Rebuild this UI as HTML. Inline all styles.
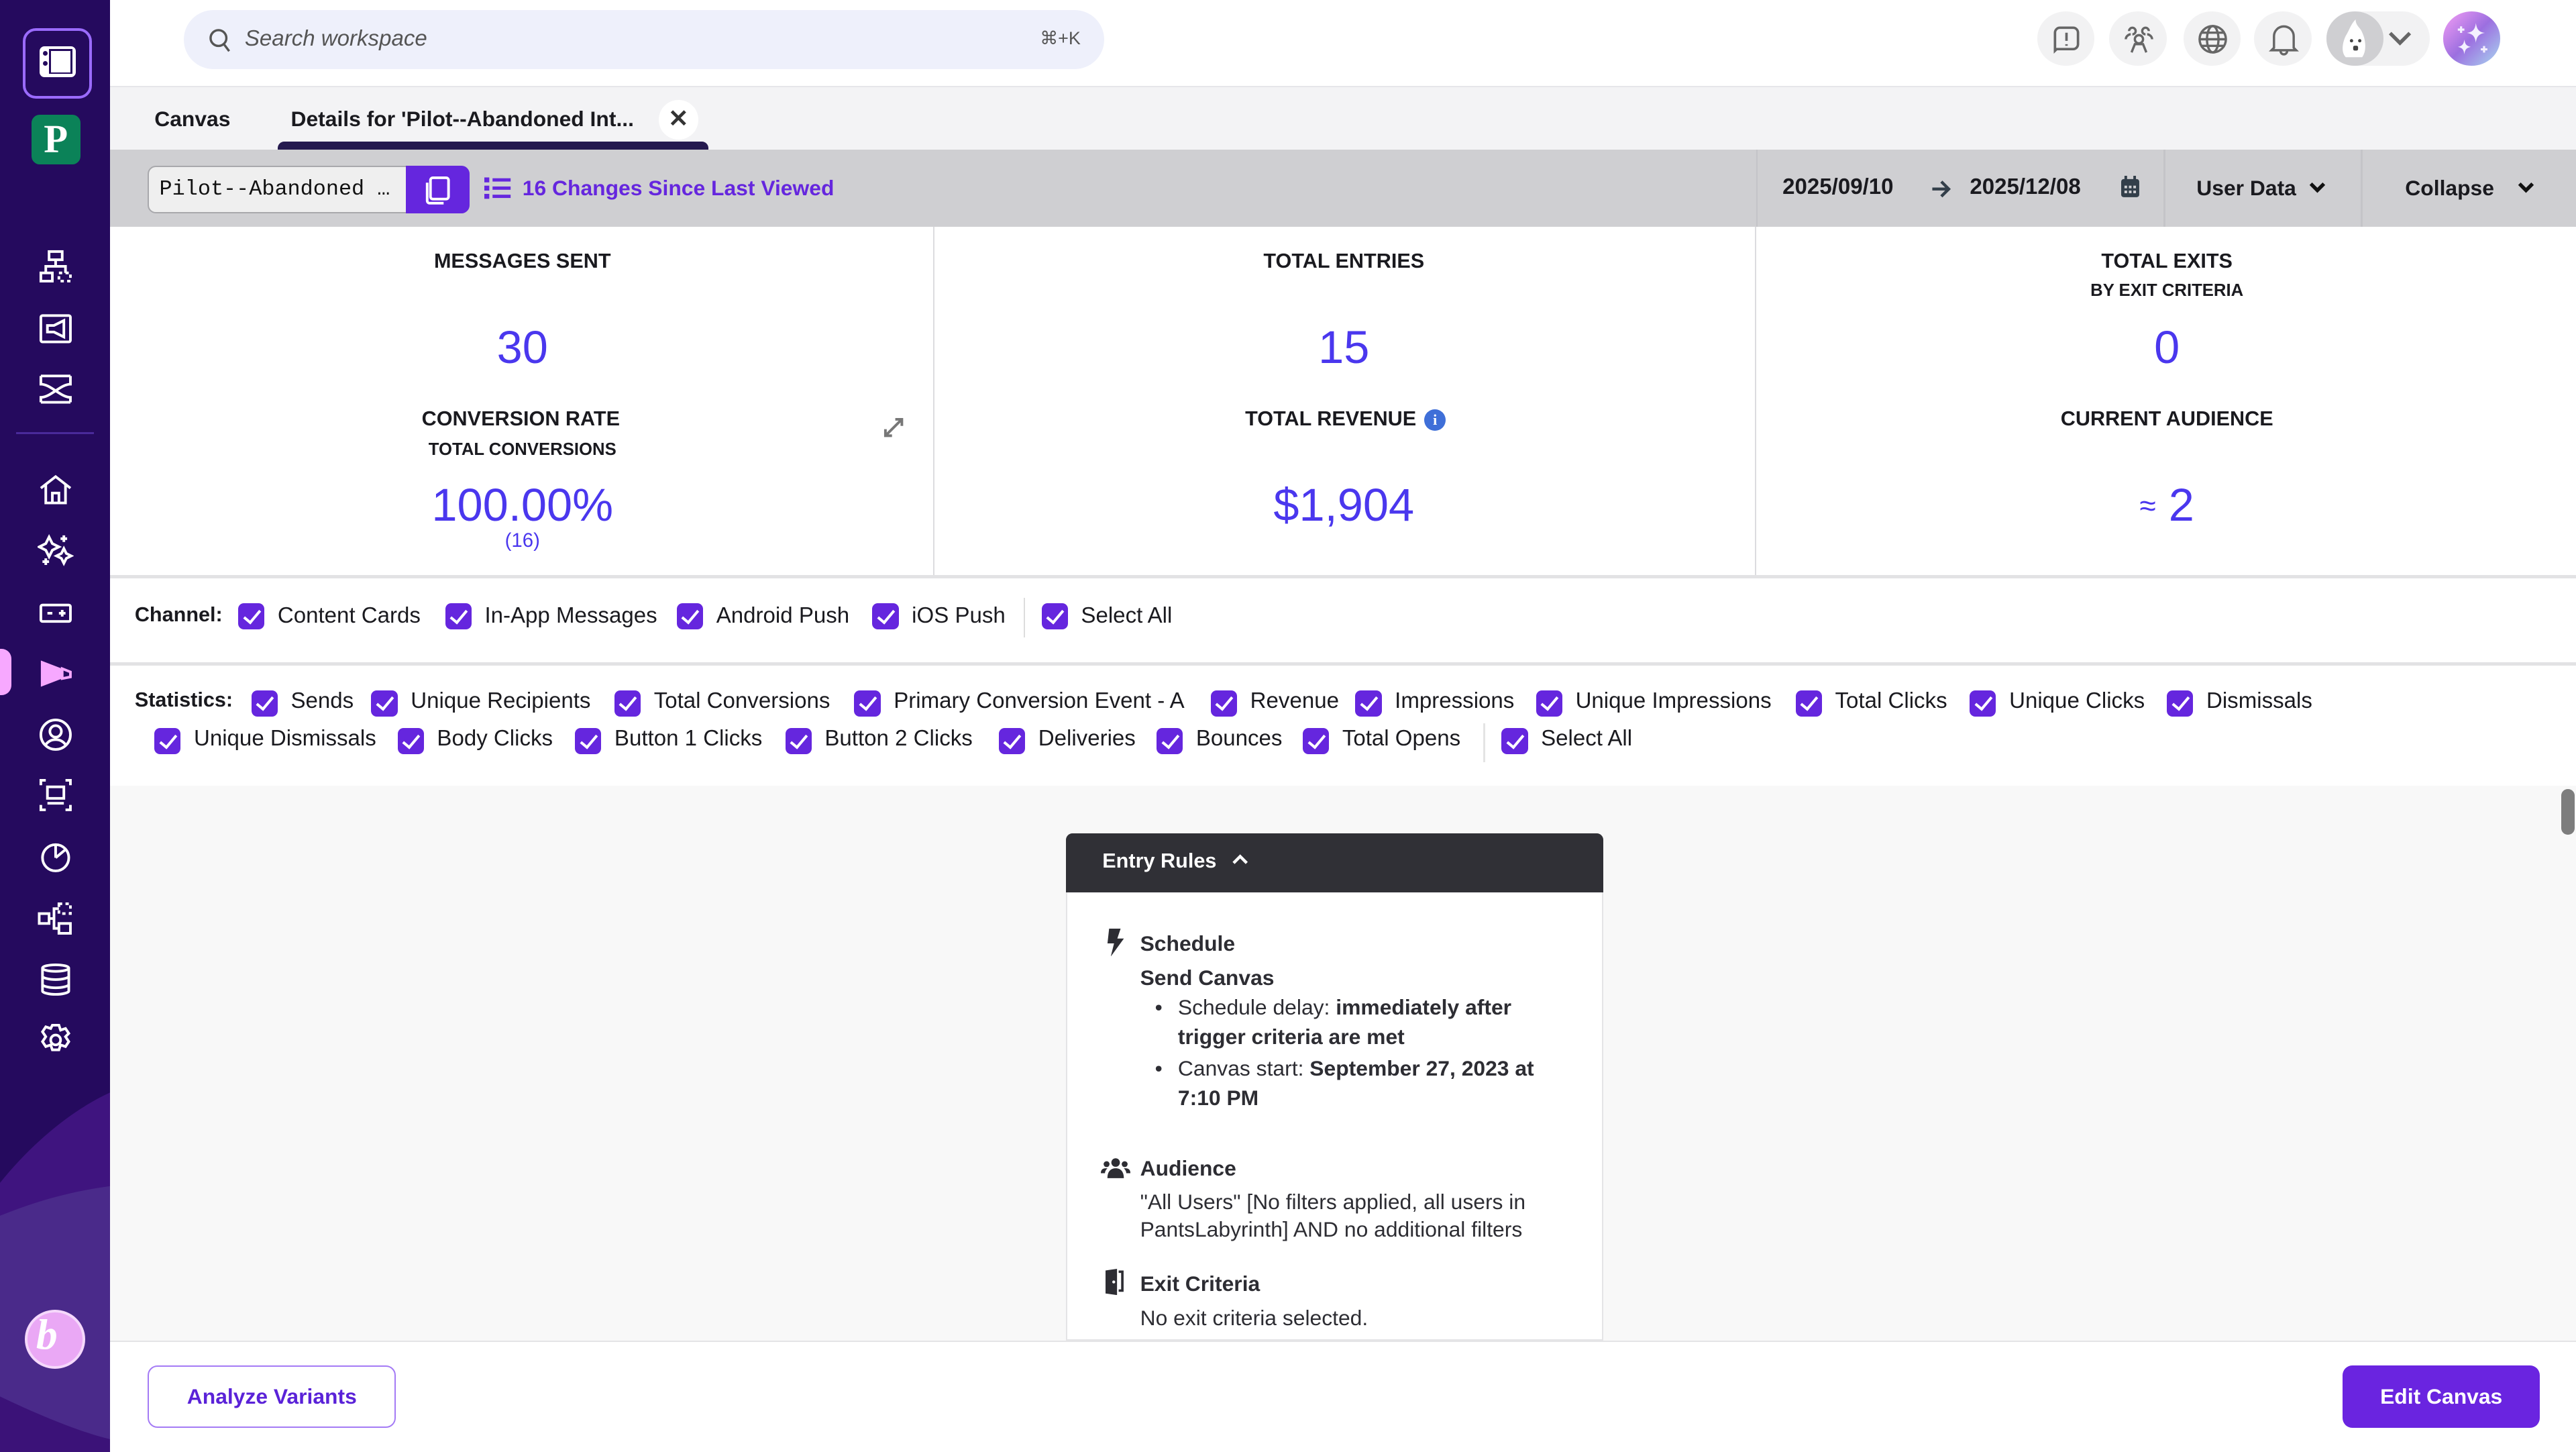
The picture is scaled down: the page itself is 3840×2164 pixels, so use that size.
<!DOCTYPE html>
<html><head><meta charset="utf-8">
<style>
*{box-sizing:border-box;margin:0;padding:0}
html,body{width:3840px;height:2164px;overflow:hidden;background:#fff}
#w{zoom:2.44898;width:1568px;height:884px;position:relative;font-family:"Liberation Sans",sans-serif;color:#1a1a1f;overflow:hidden}
.a{position:absolute}
.sb{left:0;top:0;width:67px;height:884px;background:#250a5e;overflow:hidden}
.ic{position:absolute;left:23px;width:22px;height:22px}
.cb{position:absolute;width:16px;height:16px;border-radius:3.5px;background:#6526de}
.cb:after{content:"";position:absolute;left:5.5px;top:2px;width:4px;height:8.5px;border:solid #fff;border-width:0 2px 2px 0;transform:rotate(40deg)}
.lb{position:absolute;font-size:13.5px;white-space:nowrap}
.hd{position:absolute;font-weight:bold;font-size:12.5px;text-align:center;width:500px}
.sub{position:absolute;font-weight:bold;font-size:10.5px;text-align:center;width:500px}
.num{position:absolute;color:#4a37ee;text-align:center;width:500px;font-size:28px}
.circ{position:absolute;top:7px;width:35px;height:33px;border-radius:50%;background:#f2f2f3}
.er{font-size:13px;color:#2d2d33;line-height:18px}
</style></head><body><div id="w">
<div class="a sb">
 <svg class="a" style="left:0;top:600px" width="67" height="284"><path d="M0 120 C20 95 45 75 67 65 L67 284 L0 284Z" fill="#3f147f"/><path d="M0 140 C25 130 45 125 67 122 L67 284 L0 284Z" fill="#4a2a8a"/><path d="M0 250 C25 262 50 272 67 276 L67 284 L0 284Z" fill="#3b1278"/></svg>
 <div class="a" style="left:14px;top:17px;width:42px;height:43px;border:2px solid #9b6bff;border-radius:8px"></div>
 <div class="a" style="left:24px;top:28px;width:22px;height:19px;background:#fff;border-radius:3px"></div>
 <div class="a" style="left:26px;top:31px;width:3px;height:3px;background:#250a5e;border-radius:50%"></div>
 <div class="a" style="left:26px;top:37px;width:3px;height:3px;background:#250a5e;border-radius:50%"></div>
 <div class="a" style="left:30px;top:30px;width:14px;height:15px;background:#250a5e"></div>
 <div class="a" style="left:31px;top:31px;width:12px;height:13px;background:#fff"></div>
 <div class="a" style="left:19px;top:70px;width:30px;height:30px;background:#0b8258;border-radius:5px;color:#fff;font:bold 24px 'Liberation Serif',serif;text-align:center;line-height:30px">P</div>
 <svg class="ic" style="top:151px" viewBox="0 0 22 22" fill="none" stroke="#fff" stroke-width="1.6"><rect x="7" y="2" width="8" height="5"/><rect x="2" y="15" width="7" height="5"/><rect x="13" y="15" width="7" height="5" stroke-dasharray="2 2"/><path d="M11 7v4M5 15v-4h12v4"/></svg>
 <svg class="ic" style="top:189px" viewBox="0 0 22 22" fill="none" stroke="#fff" stroke-width="1.6"><rect x="2" y="3" width="18" height="16" rx="1"/><path d="M6 9h4l6-3v10l-6-3H6z"/></svg>
 <svg class="ic" style="top:226px" viewBox="0 0 22 22" fill="none" stroke="#fff" stroke-width="1.6"><path d="M2 3h18M2 19h18M2 3v5c6 0 12 8 18 8v3M20 3v5C14 8 8 16 2 16v3"/></svg>
 <div class="a" style="left:10px;top:263px;width:47px;height:1px;background:#4a2a9a"></div>
 <svg class="ic" style="top:287px" viewBox="0 0 22 22" fill="none" stroke="#fff" stroke-width="1.6"><path d="M2 10L11 3l9 7M5 8v11h12V8M9 19v-6h4v6"/></svg>
 <svg class="ic" style="top:324px" viewBox="0 0 22 22" fill="none" stroke="#fff" stroke-width="1.6"><path d="M7 3l2 4 4 2-4 2-2 4-2-4-4-2 4-2zM16 10l1.5 3 3 1.5-3 1.5-1.5 3-1.5-3-3-1.5 3-1.5zM16 2v4M14 4h4M5 16v4M3 18h4"/></svg>
 <svg class="ic" style="top:362px" viewBox="0 0 22 22" fill="none" stroke="#fff" stroke-width="1.6"><rect x="2" y="6" width="18" height="10" rx="1"/><path d="M6 11h3M15 9v4M13 11h4"/></svg>
 <div class="a" style="left:0;top:395px;width:7px;height:28px;background:#f7a8ff;border-radius:0 6px 6px 0"></div>
 <svg class="ic" style="top:399px" viewBox="0 0 22 22"><path d="M2 3l13 5v6L2 19z" fill="#f7a8ff"/><path d="M15 8l5 2v3l-5 1z" fill="none" stroke="#f7a8ff" stroke-width="1.6"/></svg>
 <svg class="ic" style="top:436px" viewBox="0 0 22 22" fill="none" stroke="#fff" stroke-width="1.6"><circle cx="11" cy="11" r="9"/><circle cx="11" cy="9" r="3.5"/><path d="M5 17c3-4 9-4 12 0"/></svg>
 <svg class="ic" style="top:473px" viewBox="0 0 22 22" fill="none" stroke="#fff" stroke-width="1.6"><path d="M2 5V2h3M17 2h3v3M2 17v3h3M17 20h3v-3"/><rect x="6" y="6" width="10" height="7"/><path d="M6 16h10"/></svg>
 <svg class="ic" style="top:510px" viewBox="0 0 22 22" fill="none" stroke="#fff" stroke-width="1.6"><circle cx="11" cy="12" r="8"/><path d="M11 12V4M11 12l6-5"/></svg>
 <svg class="ic" style="top:548px" viewBox="0 0 22 22" fill="none" stroke="#fff" stroke-width="1.6"><rect x="1" y="8" width="6" height="6"/><rect x="13" y="2" width="7" height="6" stroke-dasharray="2 2"/><rect x="13" y="14" width="7" height="6"/><path d="M7 11h3v-6h3M10 11v6h3"/></svg>
 <svg class="ic" style="top:585px" viewBox="0 0 22 22" fill="none" stroke="#fff" stroke-width="1.6"><ellipse cx="11" cy="4" rx="8" ry="2"/><path d="M3 4v14c0 1 4 2 8 2s8-1 8-2V4M3 9c0 1 4 2 8 2s8-1 8-2M3 14c0 1 4 2 8 2s8-1 8-2"/></svg>
 <svg class="ic" style="top:622px" viewBox="0 0 22 22" fill="none" stroke="#fff" stroke-width="1.6"><path d="M9 2h4l1 3 3-1 2 3-2 2 0 0 2 3-2 3-3-1-1 3H9l-1-3-3 1-2-3 2-3-2-3 2-3 3 1z"/><circle cx="11" cy="11" r="3"/></svg>
 <div class="a" style="left:15px;top:797px;width:37px;height:36px;border-radius:50%;background:#eaa8f5;border:2px solid #f5d8fb"></div>
 <div class="a" style="left:22px;top:797px;color:#fff;font:italic bold 26px 'Liberation Serif',serif">b</div>
</div>
<div class="a" style="left:67px;top:0;width:1501px;height:53px;background:#fff;border-bottom:1px solid #e6e6ea"></div>
<div class="a" style="left:112px;top:6px;width:560px;height:36px;border-radius:18px;background:#eef0fb"></div>
<svg class="a" style="left:127px;top:17px" width="14" height="15" viewBox="0 0 14 15" fill="none" stroke="#555" stroke-width="1.4"><circle cx="6" cy="6" r="4.8"/><path d="M9.5 10l3 4"/></svg>
<div class="a" style="left:149px;top:16px;font-size:13.5px;font-style:italic;color:#555">Search workspace</div>
<div class="a" style="left:633px;top:17px;font-size:11px;color:#555">⌘+K</div>
<div class="circ" style="left:1240px"></div>
<svg class="a" style="left:1248px;top:14px" width="20" height="20" viewBox="0 0 20 20" fill="none" stroke="#666" stroke-width="1.5"><path d="M3 17V6a3 3 0 0 1 3-3h8a3 3 0 0 1 3 3v7a3 3 0 0 1-3 3H4z"/><path d="M10 6v5M10 13v1"/></svg>
<div class="circ" style="left:1284px"></div>
<svg class="a" style="left:1292px;top:14px" width="20" height="20" viewBox="0 0 20 20" fill="none" stroke="#666" stroke-width="1.4"><circle cx="10" cy="10" r="2.5"/><path d="M5.5 18l2-5h5l2 5M4 5a2 2 0 1 1 2 2M16 5a2 2 0 1 0-2 2M2 10c0-2 2-3 3-3M18 10c0-2-2-3-3-3"/></svg>
<div class="circ" style="left:1329px"></div>
<svg class="a" style="left:1337px;top:14px" width="20" height="20" viewBox="0 0 20 20" fill="none" stroke="#666" stroke-width="1.4"><circle cx="10" cy="10" r="8"/><ellipse cx="10" cy="10" rx="3.5" ry="8"/><path d="M2 10h16M3 6h14M3 14h14"/></svg>
<div class="circ" style="left:1372px"></div>
<svg class="a" style="left:1380px;top:13px" width="20" height="22" viewBox="0 0 20 22" fill="none" stroke="#666" stroke-width="1.4"><path d="M4 16V9a6 6 0 0 1 12 0v7l1.5 1.5h-15zM8 18a2 2 0 0 0 4 0"/></svg>
<div class="a" style="left:1416px;top:7px;width:63px;height:33px;border-radius:17px;background:#f2f2f3"></div>
<div class="a" style="left:1416px;top:7px;width:35px;height:33px;border-radius:50%;background:#cfcfd2"></div>
<svg class="a" style="left:1424px;top:10px" width="20" height="28" viewBox="0 0 20 28"><path d="M4 25c-3-3-2-9 0-13 2-3 3-7 6-10 0 4 3 5 4 8 2 4 3 11 0 15z" fill="#fff"/><circle cx="7.5" cy="15" r="1" fill="#444"/><circle cx="12.5" cy="15" r="1" fill="#444"/><rect x="8.5" y="18" width="3" height="3" rx="1" fill="#444"/></svg>
<svg class="a" style="left:1453px;top:17px" width="16" height="12" viewBox="0 0 16 12" fill="none" stroke="#666" stroke-width="2.2"><path d="M2 3l6 6 6-6"/></svg>
<div class="a" style="left:1487px;top:7px;width:35px;height:33px;border-radius:50%;background:linear-gradient(135deg,#f59ef5,#9c6fe0 50%,#a8d8f0)"></div>
<svg class="a" style="left:1492px;top:11px" width="26" height="26" viewBox="0 0 26 26" fill="#f4f0ff"><path d="M15 3c.6 4 2 5.5 5.5 6-3.5.6-5 2-5.5 6-.6-4-2-5.4-5.5-6 3.5-.5 5-2 5.5-6zM8 13c.4 3 1.4 4 4 4.5-2.6.5-3.6 1.5-4 4.5-.4-3-1.400-4-4-4.5 2.6-.5 3.6-1.5 4-4.5z"/><path d="M6 5v4M4 7h4M20 17v4M18 19h4" stroke="#f4f0ff" stroke-width="1.3"/></svg>
<div class="a" style="left:67px;top:53px;width:1501px;height:38px;background:#f3f3f5"></div>
<div class="a" style="left:94px;top:65px;font-size:13px;font-weight:bold">Canvas</div>
<div class="a" style="left:177px;top:65px;font-size:13px;font-weight:bold">Details for 'Pilot--Abandoned Int...</div>
<div class="a" style="left:401px;top:61px;width:24px;height:24px;border-radius:50%;background:#fff;text-align:center;font:bold 15px 'Liberation Sans';line-height:23px;color:#333">✕</div>
<div class="a" style="left:169px;top:86px;width:262px;height:5px;background:#251a4f;border-radius:4px 4px 0 0"></div>
<div class="a" style="left:67px;top:91px;width:1501px;height:47px;background:#cfcfd2"></div>
<div class="a" style="left:90px;top:101px;width:196px;height:29px;border:1px solid #a8a8ac;border-radius:5px;background:#efefef;overflow:hidden"></div>
<div class="a" style="left:97px;top:108px;font:13px 'Liberation Mono',monospace;color:#111">Pilot--Abandoned …</div>
<div class="a" style="left:247px;top:101px;width:39px;height:29px;background:#6526de;border-radius:0 5px 5px 0"></div>
<svg class="a" style="left:256px;top:106px" width="20" height="20" viewBox="0 0 20 20" fill="none" stroke="#fff" stroke-width="1.6"><rect x="6" y="2" width="11" height="13" rx="1.5"/><path d="M4 5v11a1.5 1.5 0 0 0 1.5 1.5H14"/></svg>
<svg class="a" style="left:295px;top:107px" width="16" height="15" viewBox="0 0 16 15" fill="#6526de"><rect x="0" y="1" width="3" height="3"/><rect x="0" y="6" width="3" height="3"/><rect x="0" y="11" width="3" height="3"/><rect x="5" y="1.5" width="11" height="2"/><rect x="5" y="6.5" width="11" height="2"/><rect x="5" y="11.5" width="11" height="2"/></svg>
<div class="a" style="left:318px;top:107px;font-size:13px;font-weight:bold;color:#6526de">16 Changes Since Last Viewed</div>
<div class="a" style="left:1069px;top:91px;width:1px;height:47px;background:#c4c4c8"></div>
<div class="a" style="left:1085px;top:106px;font-size:13.5px;font-weight:bold">2025/09/10</div>
<svg class="a" style="left:1175px;top:109px" width="13" height="12" viewBox="0 0 13 12" fill="none" stroke="#333f4a" stroke-width="1.8"><path d="M1 6h10M6.5 1.5L11 6l-4.5 4.5"/></svg>
<div class="a" style="left:1199px;top:106px;font-size:13.5px;font-weight:bold">2025/12/08</div>
<svg class="a" style="left:1291px;top:107px" width="11" height="13" viewBox="0 0 11 13"><rect x="0" y="2" width="11" height="11" rx="1.5" fill="#333f4a"/><rect x="2" y="0" width="1.6" height="3" fill="#333f4a"/><rect x="7.4" y="0" width="1.6" height="3" fill="#333f4a"/><g fill="#cfcfd2"><rect x="2" y="6" width="1.6" height="1.6"/><rect x="4.7" y="6" width="1.6" height="1.6"/><rect x="7.4" y="6" width="1.6" height="1.6"/><rect x="2" y="9" width="1.6" height="1.6"/><rect x="4.7" y="9" width="1.6" height="1.6"/><rect x="7.4" y="9" width="1.6" height="1.6"/></g></svg>
<div class="a" style="left:1317px;top:91px;width:1px;height:47px;background:#c4c4c8"></div>
<div class="a" style="left:1337px;top:107px;font-size:13px;font-weight:bold">User Data</div>
<svg class="a" style="left:1405px;top:110px" width="11" height="9" viewBox="0 0 11 9" fill="none" stroke="#111" stroke-width="2.2"><path d="M1.5 2l4 4 4-4"/></svg>
<div class="a" style="left:1437px;top:91px;width:1px;height:47px;background:#c4c4c8"></div>
<div class="a" style="left:1464px;top:107px;font-size:13px;font-weight:bold">Collapse</div>
<svg class="a" style="left:1532px;top:110px" width="11" height="9" viewBox="0 0 11 9" fill="none" stroke="#111" stroke-width="2.2"><path d="M1.5 2l4 4 4-4"/></svg>
<div class="a" style="left:568px;top:138px;width:1px;height:213px;background:#dcdcdf"></div>
<div class="a" style="left:1068px;top:138px;width:1px;height:213px;background:#dcdcdf"></div>
<div class="a" style="left:67px;top:350px;width:1501px;height:2px;background:#e2e2e4"></div>
<div class="hd" style="left:68px;top:152px">MESSAGES SENT</div>
<div class="num" style="left:68px;top:195px">30</div>
<div class="hd" style="left:67px;top:248px">CONVERSION RATE</div>
<div class="sub" style="left:68px;top:268px">TOTAL CONVERSIONS</div>
<div class="num" style="left:68px;top:291px">100.00%</div>
<div class="a" style="left:68px;top:322px;width:500px;text-align:center;color:#4a37ee;font-size:12px">(16)</div>
<svg class="a" style="left:537px;top:253px" width="14" height="14" viewBox="0 0 14 14" fill="none" stroke="#777" stroke-width="1.6"><path d="M2 12l10-10M8 2h4v4M2 8v4h4"/></svg>
<div class="hd" style="left:568px;top:152px">TOTAL ENTRIES</div>
<div class="num" style="left:568px;top:195px">15</div>
<div class="hd" style="left:560px;top:248px">TOTAL REVENUE</div>
<div class="a" style="left:867px;top:249px;width:13px;height:13px;border-radius:50%;background:#3f6fd8;color:#fff;font:bold 9px 'Liberation Serif';text-align:center;line-height:13px">i</div>
<div class="num" style="left:568px;top:291px">$1,904</div>
<div class="hd" style="left:1069px;top:152px">TOTAL EXITS</div>
<div class="sub" style="left:1069px;top:171px">BY EXIT CRITERIA</div>
<div class="num" style="left:1069px;top:195px">0</div>
<div class="hd" style="left:1069px;top:248px">CURRENT AUDIENCE</div>
<div class="num" style="left:1069px;top:291px"><span style="font-size:18px;vertical-align:3px">≈</span> 2</div>
<div class="a" style="left:82px;top:367px;font-size:12.5px;font-weight:bold">Channel:</div>
<div class="cb" style="left:145px;top:367px"></div><div class="lb" style="left:169px;top:367px">Content Cards</div>
<div class="cb" style="left:271px;top:367px"></div><div class="lb" style="left:295px;top:367px">In-App Messages</div>
<div class="cb" style="left:412px;top:367px"></div><div class="lb" style="left:436px;top:367px">Android Push</div>
<div class="cb" style="left:531px;top:367px"></div><div class="lb" style="left:555px;top:367px">iOS Push</div>
<div class="a" style="left:623px;top:364px;width:1px;height:24px;background:#ddd"></div>
<div class="cb" style="left:634px;top:367px"></div><div class="lb" style="left:658px;top:367px">Select All</div>
<div class="a" style="left:67px;top:403px;width:1501px;height:2px;background:#e2e2e4"></div>
<div class="a" style="left:82px;top:419px;font-size:12.5px;font-weight:bold">Statistics:</div>
<div class="cb" style="left:153px;top:420px"></div><div class="lb" style="left:177px;top:419px">Sends</div>
<div class="cb" style="left:226px;top:420px"></div><div class="lb" style="left:250px;top:419px">Unique Recipients</div>
<div class="cb" style="left:374px;top:420px"></div><div class="lb" style="left:398px;top:419px">Total Conversions</div>
<div class="cb" style="left:520px;top:420px"></div><div class="lb" style="left:544px;top:419px">Primary Conversion Event - A</div>
<div class="cb" style="left:737px;top:420px"></div><div class="lb" style="left:761px;top:419px">Revenue</div>
<div class="cb" style="left:825px;top:420px"></div><div class="lb" style="left:849px;top:419px">Impressions</div>
<div class="cb" style="left:935px;top:420px"></div><div class="lb" style="left:959px;top:419px">Unique Impressions</div>
<div class="cb" style="left:1093px;top:420px"></div><div class="lb" style="left:1117px;top:419px">Total Clicks</div>
<div class="cb" style="left:1199px;top:420px"></div><div class="lb" style="left:1223px;top:419px">Unique Clicks</div>
<div class="cb" style="left:1319px;top:420px"></div><div class="lb" style="left:1343px;top:419px">Dismissals</div>
<div class="cb" style="left:94px;top:443px"></div><div class="lb" style="left:118px;top:442px">Unique Dismissals</div>
<div class="cb" style="left:242px;top:443px"></div><div class="lb" style="left:266px;top:442px">Body Clicks</div>
<div class="cb" style="left:350px;top:443px"></div><div class="lb" style="left:374px;top:442px">Button 1 Clicks</div>
<div class="cb" style="left:478px;top:443px"></div><div class="lb" style="left:502px;top:442px">Button 2 Clicks</div>
<div class="cb" style="left:608px;top:443px"></div><div class="lb" style="left:632px;top:442px">Deliveries</div>
<div class="cb" style="left:704px;top:443px"></div><div class="lb" style="left:728px;top:442px">Bounces</div>
<div class="cb" style="left:793px;top:443px"></div><div class="lb" style="left:817px;top:442px">Total Opens</div>
<div class="a" style="left:903px;top:440px;width:1px;height:24px;background:#e4e4e4"></div>
<div class="cb" style="left:914px;top:443px"></div><div class="lb" style="left:938px;top:442px">Select All</div>
<div class="a" style="left:67px;top:478px;width:1501px;height:338px;background:#f8f8f8"></div>
<div class="a" style="left:1559px;top:480px;width:8px;height:28px;border-radius:4px;background:#7d7d7d"></div>
<div class="a" style="left:649px;top:507px;width:327px;height:309px;background:#fff;border:1px solid #e4e4e6;border-radius:4px 4px 0 0"></div>
<div class="a" style="left:649px;top:507px;width:327px;height:36px;background:#303036;border-radius:4px 4px 0 0"></div>
<div class="a" style="left:671px;top:517px;color:#fff;font-size:12.5px;font-weight:bold">Entry Rules</div>
<svg class="a" style="left:749px;top:518px" width="12" height="10" viewBox="0 0 12 10" fill="none" stroke="#fff" stroke-width="1.8"><path d="M2 7l4-4 4 4"/></svg>
<svg class="a" style="left:672px;top:565px" width="13" height="17" viewBox="0 0 13 17" fill="#2d2d33"><path d="M3 0h7L8 6h4L4 17l2-8H2z"/></svg>
<div class="a er" style="left:694px;top:565px;font-weight:bold">Schedule</div>
<div class="a er" style="left:694px;top:586px;font-weight:bold">Send Canvas</div>
<div class="a er" style="left:703px;top:604px">•</div>
<div class="a er" style="left:717px;top:604px">Schedule delay: <b>immediately after<br>trigger criteria are met</b></div>
<div class="a er" style="left:703px;top:641px">•</div>
<div class="a er" style="left:717px;top:641px">Canvas start: <b>September 27, 2023 at<br>7:10 PM</b></div>
<svg class="a" style="left:670px;top:704px" width="18" height="13" viewBox="0 0 18 13" fill="#2d2d33"><circle cx="9" cy="3.5" r="2.6"/><circle cx="3.5" cy="4.5" r="1.8"/><circle cx="14.5" cy="4.5" r="1.8"/><path d="M4 13c0-4 2-6 5-6s5 2 5 6z"/><path d="M0 10c0-2 1-3 3-3h1c-1 1-1.5 2-1.5 3zM18 10c0-2-1-3-3-3h-1c1 1 1.5 2 1.5 3z"/></svg>
<div class="a er" style="left:694px;top:702px;font-weight:bold">Audience</div>
<div class="a er" style="left:694px;top:723px;line-height:17px">"All Users" [No filters applied, all users in<br>PantsLabyrinth] AND no additional filters</div>
<svg class="a" style="left:673px;top:772px" width="12" height="16" viewBox="0 0 12 16" fill="#2d2d33"><path d="M0 1l7-1v16l-7-1z"/><path d="M8 1h3v13H8v-1.5h1.5v-10H8z"/><circle cx="5" cy="8" r=".9" fill="#fff"/></svg>
<div class="a er" style="left:694px;top:772px;font-weight:bold">Exit Criteria</div>
<div class="a er" style="left:694px;top:793px">No exit criteria selected.</div>
<div class="a" style="left:67px;top:816px;width:1501px;height:68px;background:#fff;border-top:1px solid #e4e4e6"></div>
<div class="a" style="left:90px;top:831px;width:151px;height:38px;border:1px solid #a47bf5;border-radius:6px;text-align:center;line-height:36px;color:#5a22d8;font-size:13px;font-weight:bold">Analyze Variants</div>
<div class="a" style="left:1426px;top:831px;width:120px;height:38px;background:#6a24e0;border-radius:6px;text-align:center;line-height:38px;color:#fff;font-size:13px;font-weight:bold">Edit Canvas</div>
</div></body></html>
